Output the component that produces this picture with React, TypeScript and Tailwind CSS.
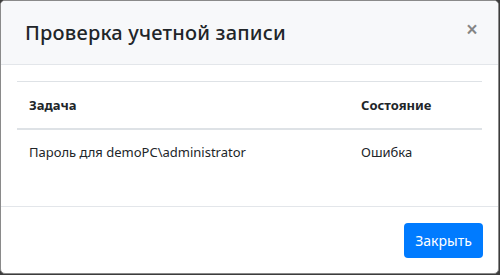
export default function App() {
  const font = { fontFamily: '"Noto Sans", "Open Sans", Arial, sans-serif' }
  return (
    <div className="h-[275px] w-[500px] bg-[#3d3d3d]" style={font}>
      <div className="flex h-[274px] w-[499px] flex-col overflow-hidden rounded-[5px] border border-[#8a8a8a] bg-white text-[#212529]">
        <div className="flex h-[64px] items-center justify-between border-b border-[#e3e6ea] bg-[#f7f8fa] pl-6 pr-5">
          <h5 className="text-[20px] font-medium leading-[30px] tracking-[0.2px]">Проверка учетной записи</h5>
          <button className="mt-[-6px] text-[21px] font-semibold leading-none text-[#858585]">×</button>
        </div>
        <div className="flex-1 px-4 pt-4">
          <table className="w-full border-collapse text-[13px]">
            <thead>
              <tr className="border-t border-b-2 border-t-[#dee2e6] border-b-[#dee2e6]">
                <th className="h-[47px] px-3 pt-[2px] text-left font-bold">Задача</th>
                <th className="w-[133px] px-3 pt-[2px] text-left font-bold">Состояние</th>
              </tr>
            </thead>
            <tbody>
              <tr>
                <td className="h-[46px] px-3 pt-[1px]">Пароль для demoPC\administrator</td>
                <td className="px-3 pt-[1px]">Ошибка</td>
              </tr>
            </tbody>
          </table>
        </div>
        <div className="flex h-[67px] items-center justify-end border-t border-[#e3e6ea] px-[15px]">
          <button className="h-[35px] w-[79px] rounded-[4px] bg-[#007bff] text-[14px] text-white">Закрыть</button>
        </div>
      </div>
    </div>
  )
}
